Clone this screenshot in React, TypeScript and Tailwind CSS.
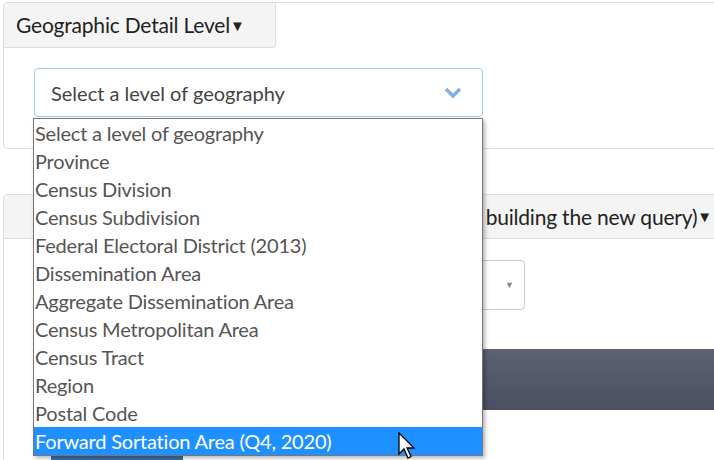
export default function App() {
  const items = [
    "Select a level of geography","Province","Census Division","Census Subdivision","Federal Electoral District (2013)","Dissemination Area","Aggregate Dissemination Area","Census Metropolitan Area","Census Tract","Region","Postal Code","Forward Sortation Area (Q4, 2020)",
  ];
  return (
    <div className="relative w-[714px] h-[460px] overflow-hidden bg-white text-[#333]" style={{ fontFamily: "Lato, 'Open Sans', sans-serif" }}>
      <div className="ml-[3px] mt-[2px] w-[720px] h-[147px] border border-[#ddd] rounded-[4px]">
        <div className="w-[272px] h-[45px] bg-[#f4f4f4] border-r border-b border-[#ddd] rounded-br-[4px] flex items-center pl-[12px] text-[21px] tracking-[-0.2px] text-[#222] whitespace-nowrap">
          Geographic Detail Level<span className="text-[15px]">▼</span>
        </div>
        <div className="ml-[30px] mt-[20px] w-[449px] h-[49px] border border-[#9ecaed] rounded-[4px] flex items-center justify-between pl-[16px] pr-[20px] text-[20px] text-[#444]">
          <span>Select a level of geography</span>
          <svg width="18" height="12" viewBox="0 0 18 12"><path d="M2 2 L9 9 L16 2" stroke="#7db3e8" strokeWidth="3.5" fill="none" /></svg>
        </div>
      </div>
      <div className="ml-[3px] mt-[45px] w-[720px] h-[300px] border border-[#ddd] rounded-[4px]">
        <div className="w-[710px] h-[44px] bg-[#f4f4f4] border-b border-[#ddd] flex items-center justify-end pr-[2px] text-[21px] tracking-[-0.2px] text-[#222] whitespace-nowrap overflow-hidden">
          Choose your variables (before building the new query)<span className="text-[15px]">▼</span>
        </div>
        <div className="ml-[300px] mt-[21px] w-[221px] h-[50px] border border-[#ccc] rounded-[4px] flex items-center justify-end pr-[10px]">
          <span className="text-[9px] text-[#888]">▼</span>
        </div>
        <div className="ml-[40px] mt-[39px] h-[61px] bg-gradient-to-b from-[#5c6274] to-[#4a5061]" />
        <div className="ml-[47px] mt-[38px] w-[132px] h-[20px] bg-[#3d6fa3]" />
      </div>
      <div className="absolute left-[33px] top-[118px] w-[450px] border border-[#777] bg-white shadow-[2px_2px_4px_rgba(0,0,0,0.3)] text-[20px] text-[#555] leading-[28px]">
        {items.map((t, i) => (
          <div key={i} className={"h-[28px] pl-[1px] whitespace-nowrap tracking-[-0.2px] " + (i === 11 ? "bg-[#1e90ff] text-white" : "")}>{t}</div>
        ))}
      </div>
      <svg className="absolute left-[398px] top-[432px]" width="20" height="28" viewBox="0 0 20 28">
        <path d="M1 1 L1 22 L6 17 L10 26 L13 24.5 L9 16 L16 16 Z" fill="white" stroke="black" strokeWidth="1.3" />
      </svg>
    </div>
  );
}
